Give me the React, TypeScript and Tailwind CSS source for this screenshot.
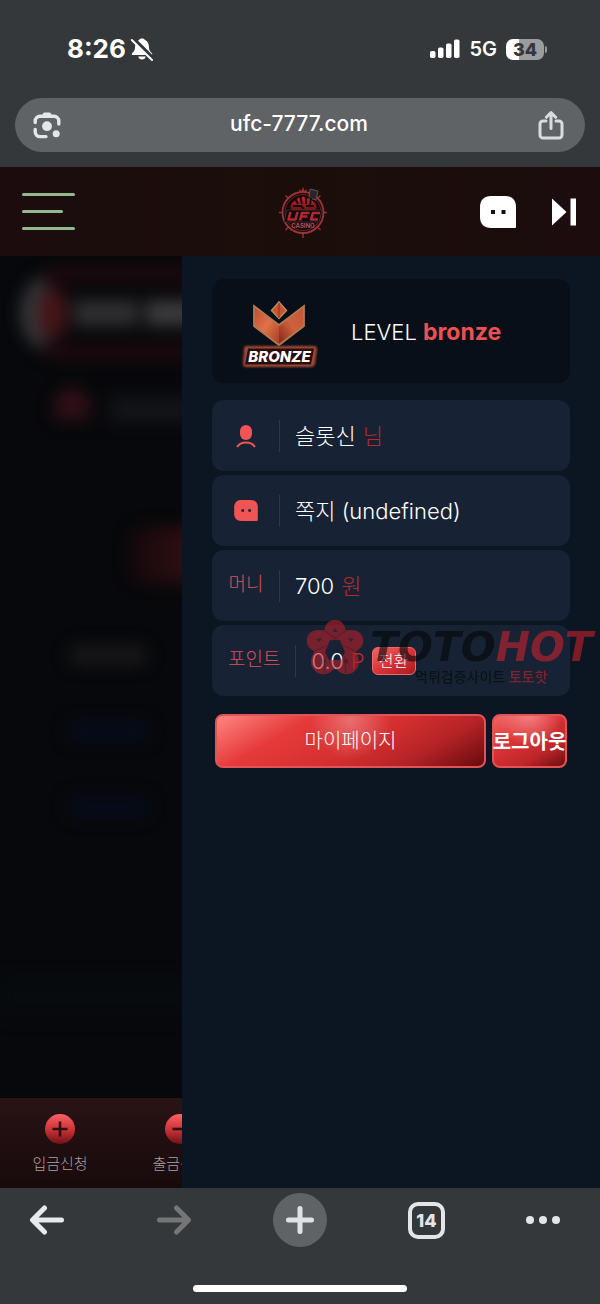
import type { ReactNode } from 'react';

const tabs = [
  { label: '입금신청', sign: 'plus' },
  { label: '출금신청', sign: 'minus' },
];

const BellOffIcon = () => (
  <svg viewBox="0 0 24 24" className="h-6 w-6" aria-hidden="true">
    <path
      fill="#fff"
      d="M12 1.600c-1.700 0-2.500.6-3 1.500C6.500 4.200 5.200 6.600 5.100 9.400c-.1 3.500-.7 4.600-2.900 6.600-.9.900-.5 2.100.9 2.100h17.800c1.400 0 1.800-1.200.9-2.100-2.200-2-2.800-3.100-2.900-6.600-.1-2.800-1.400-5.200-3.900-6.300-.5-.9-1.300-1.500-3-1.500zM8.300 19.500h7.400c-.3 1.900-1.700 3-3.700 3s-3.400-1.100-3.700-3z"
    />
    <path d="M3.200 1.600 23 21.400" stroke="#35383a" strokeWidth="4" />
    <path d="M1.800 3 22 23" stroke="#fff" strokeWidth="1.900" strokeLinecap="round" />
  </svg>
);

const SignalIcon = () => (
  <svg viewBox="0 0 30 20" className="h-5 w-[30px]" fill="#fff" aria-hidden="true">
    <rect x="0" y="12" width="5.500" height="7" rx="1.700" />
    <rect x="8" y="8.500" width="5.500" height="10.500" rx="1.700" />
    <rect x="16" y="4.500" width="5.500" height="14.500" rx="1.700" />
    <rect x="24" y="0.500" width="5.500" height="18.500" rx="1.700" />
  </svg>
);

const LensIcon = () => (
  <svg viewBox="0 0 28 28" className="h-7 w-7" aria-hidden="true">
    <g fill="none" stroke="#e4e7ea" strokeWidth="3.400" strokeLinecap="round">
      <path d="M2.200 11.500V10a4.800 4.800 0 0 1 4.800-4.800h14a4.800 4.800 0 0 1 4.800 4.800v3" />
      <path d="M2.200 18.500v2.300A4.800 4.800 0 0 0 7 25.600h6" />
    </g>
    <path d="M8.500 6l1.600-3.400c.3-.6.8-1 1.500-1h4.800c.7 0 1.200.4 1.500 1L19.500 6z" fill="#e4e7ea" />
    <circle cx="14" cy="15.200" r="4.900" fill="#e4e7ea" />
    <circle cx="23.200" cy="22.800" r="3.500" fill="#e4e7ea" />
  </svg>
);

const ShareIcon = () => (
  <svg
    viewBox="0 0 28 30"
    className="h-[30px] w-7"
    fill="none"
    stroke="#d9dcdf"
    strokeWidth="3"
    strokeLinecap="round"
    strokeLinejoin="round"
    aria-hidden="true"
  >
    <path d="M9 11H6a3 3 0 0 0-3 3v11a3 3 0 0 0 3 3h16a3 3 0 0 0 3-3V14a3 3 0 0 0-3-3h-3" />
    <path d="M14 18.500V3.500M9.300 7.300 14 2.600l4.700 4.700" />
  </svg>
);

const MessageIcon = ({ className, eyes }: { className: string; eyes: string }) => (
  <svg viewBox="0 0 36 32" className={className} aria-hidden="true">
    <path
      fill="currentColor"
      d="M11 0h14c7 0 11 4 11 11v19.500c0 1-.5 1.500-1.500 1.500H11C4 32 0 28 0 21V11C0 4 4 0 11 0z"
    />
    <path d="M11 14h4v4h-4zM21.500 14h4v4h-4z" fill={eyes} />
  </svg>
);

const UserIcon = () => (
  <svg viewBox="0 0 20 24" className="h-6 w-5" aria-hidden="true">
    <rect x="4" y="1" width="12" height="15" rx="6" fill="#f05454" />
    <path d="M1.500 22.300c4-5 13-5 17 0" fill="none" stroke="#f05454" strokeWidth="2" strokeLinecap="round" />
  </svg>
);

const UfcLogo = () => (
  <svg viewBox="0 0 48 52" className="h-[52px] w-12" role="img" aria-label="UFC Casino">
    <defs>
      <linearGradient id="ufcFill" x1="0" y1="0" x2="0" y2="1">
        <stop offset="0" stopColor="#c32a32" />
        <stop offset="1" stopColor="#6c1016" />
      </linearGradient>
    </defs>
    <path
      d="M24 45v7M0 26.500h6M42 26.500h6M6.500 9.500l4 4M41.500 9.500l-4 4M6.500 44l4-4M41.500 44l-4-4"
      stroke="#8f3035"
      strokeWidth="1.500"
    />
    <circle cx="24" cy="26.500" r="20.500" fill="#160809" stroke="#9c3439" strokeWidth="1.800" />
    <circle cx="24" cy="26.500" r="18" fill="none" stroke="#6b2226" strokeWidth="1" />
    <path d="M21 7l-1-4 2.500 2L24 1l1.500 4L28 3l-1 4z" fill="#a33037" />
    <path d="M31 3l8 2-2 9-7-2z" fill="#2b2527" stroke="#5c5557" strokeWidth="1" />
    <path
      d="M11 21c1-4 3-6 6-7l2-3 3 1 2-2 3 2 4 0 3 3c2 1 4 4 4 7l-3 3H13z"
      fill="url(#ufcFill)"
      stroke="#350a0d"
      strokeWidth="1"
    />
    <path
      d="M16 12l3 6M21 10l2 8M27 10v8M32 12l-1 7M14 20h8l3 3M27 20h8"
      stroke="#1c0708"
      strokeWidth="1.800"
      fill="none"
    />
    <path d="M8 24h35l-3 12H5z" fill="#130a0c" stroke="#473c3e" strokeWidth="0.600" />
    <g fill="none" stroke="#b12730" strokeWidth="2.600" strokeLinejoin="round">
      <path d="M11.500 26l-2 7.500h7l2-7.500M21 34.500l2-7.500h7.500M22.500 30.500h6M41 27h-7l-2 6.500h7" />
    </g>
    <text x="24" y="42" textAnchor="middle" fill="#b95156" className="font-['Inter'] text-[6px] font-bold">
      CASINO
    </text>
  </svg>
);

const BronzeBadge = () => (
  <svg viewBox="0 0 80 74" className="h-[74px] w-20" role="img" aria-label="Bronze">
    <defs>
      <linearGradient id="bronzeLeft" x1="0" y1="0" x2="1" y2="1">
        <stop offset="0" stopColor="#b94c30" />
        <stop offset="0.500" stopColor="#e0714a" />
        <stop offset="1" stopColor="#a83c22" />
      </linearGradient>
      <linearGradient id="bronzeRight" x1="1" y1="0" x2="0" y2="1">
        <stop offset="0" stopColor="#c25634" />
        <stop offset="0.500" stopColor="#cf603e" />
        <stop offset="1" stopColor="#7e2814" />
      </linearGradient>
      <filter id="plateGlow" x="-20%" y="-50%" width="140%" height="200%">
        <feGaussianBlur stdDeviation="1.200" />
      </filter>
    </defs>
    <g transform="translate(-1 6)">
      <path d="M14 5l25 19v20L14 25z" fill="url(#bronzeLeft)" />
      <path d="M64 5 39 24v20l25-19z" fill="url(#bronzeRight)" />
      <path d="M14 5l25 19L64 5v20L39 44 14 25z" fill="none" stroke="#b27a52" strokeWidth="1.800" />
      <path d="M39 1l7.500 8.500-7.500 8-7.500-8z" fill="#c9532f" stroke="#b98a60" strokeWidth="1.500" />
      <path d="M39 2v15" stroke="#8d3218" strokeWidth="1" />
      <path d="M6 45h68q3 0 3 3l-2 15q-1 3-4 3H6q-3 0-3-3l1-15q0-3 2-3z" fill="#a04a34" filter="url(#plateGlow)" />
      <path d="M8 47.500h66l-3 16H5z" fill="#2a0c0c" />
      <text
        x="39.500"
        y="61"
        textAnchor="middle"
        fill="#fff"
        className="font-['Inter'] text-[15px] font-extrabold italic"
      >
        BRONZE
      </text>
    </g>
  </svg>
);

const FlowerMark = () => (
  <svg viewBox="0 0 58 58" className="h-[58px] w-[58px] shrink-0" aria-hidden="true">
    <path
      fill="#b81f2b"
      fillRule="evenodd"
      d="M29 1c6 0 10 4 10.500 10.500C49 9.500 56 13 57 19.500c1 6-2 10-7.500 13C53 38 54 43 52 47.500c-2.500 5.500-8 8.500-13.500 7.500-4-.7-7-3-9.500-6-2.500 3-5.500 5.300-9.500 6-5.500 1-11-2-13.500-7.500-2-4.500-1-9.500 2.500-15C3 29.500 0 25.500 1 19.500c1-6.500 8-10 17.500-8C19 5 23 1 29 1zM24 21l-5 12 4 8h12l4-8-5-12z"
    />
    <path
      d="M29 9l2.500 4h-5zM10 20l6-1-3 4zM48 20l-6-1 3 4zM16 45l1-6 4 4zM42 45l-1-6-4 4z"
      fill="#172334"
      opacity="0.700"
    />
    <path
      d="M19 12l14 10M39 12 25 22M49 32l-15-7M9 32l15-7M40 54l-2-17M18 54l2-17"
      stroke="#7a1822"
      strokeWidth="1.200"
      opacity="0.700"
    />
  </svg>
);

const InfoRow = ({ label, children }: { label: ReactNode; children: ReactNode }) => (
  <li className="relative flex h-[71px] items-center gap-[15px] rounded-xl bg-[#172334] px-4">
    <span className="flex min-w-9 justify-center text-[19px] font-light text-[#d9505a]">{label}</span>
    <span className="h-8 w-px bg-[#263a50]" />
    <div className="flex items-center gap-[7px] pt-px text-[22px] font-light whitespace-nowrap text-white">
      {children}
    </div>
  </li>
);

const Watermark = () => (
  <div className="pointer-events-none absolute -top-[6px] left-[94px] flex items-start gap-[6px] whitespace-nowrap opacity-60">
    <FlowerMark />
    <div className="pt-[6px]">
      <p className="font-['DejaVu_Sans'] text-[41px] leading-[44px] font-bold text-[#030608] italic">
        TOTO<span className="text-[#c9202c]">HOT</span>
      </p>
      <p className="pl-[45px] text-[14px] leading-4 font-medium text-[#030608]">
        먹튀검증사이트 <span className="text-[#c9202c]">토토핫</span>
      </p>
    </div>
  </div>
);

const BrowserTop = () => (
  <header className="bg-[#35383a] px-[15px] pb-[15px]">
    <div className="flex h-[98px] items-center justify-between pr-[38px] pl-[52px]">
      <div className="flex items-center gap-1">
        <span className="text-[26px] leading-8 font-bold text-white">8:26</span>
        <BellOffIcon />
      </div>
      <div className="flex items-center gap-[9px]">
        <SignalIcon />
        <span className="text-[20px] font-semibold text-white">5G</span>
        <div className="flex items-center gap-px">
          <span className="flex h-[21px] w-[38px] items-center justify-center rounded-[7px] bg-linear-to-r from-white from-35% to-[#9a9c9d] to-35% text-[18px] font-extrabold text-[#35383a]">
            34
          </span>
          <span className="h-[7px] w-[2px] rounded-r-full bg-[#9a9c9d]" />
        </div>
      </div>
    </div>
    <div className="flex h-[54px] items-center justify-between rounded-full bg-[#5f6366] pr-5 pl-[18px]">
      <button type="button" aria-label="Lens">
        <LensIcon />
      </button>
      <a href="#" className="pb-[2px] text-[21px] leading-6 font-medium text-white">
        ufc-7777.com
      </a>
      <button type="button" aria-label="Share">
        <ShareIcon />
      </button>
    </div>
  </header>
);

const SiteHeader = () => (
  <div className="grid h-[89px] grid-cols-3 items-center bg-linear-to-r from-[#1c0c0e] via-[#1b0e0a] to-[#1c0c0e] pr-6 pl-[22px]">
    <button type="button" aria-label="Menu" className="flex flex-col gap-[14px]">
      <span className="h-[3px] w-[53px] rounded-full bg-[#94b990]" />
      <span className="h-[3px] w-[41px] rounded-full bg-[#94b990]" />
      <span className="h-[3px] w-[53px] rounded-full bg-[#94b990]" />
    </button>
    <a href="#" className="justify-self-center pl-2">
      <UfcLogo />
    </a>
    <div className="flex items-center gap-9 justify-self-end text-white">
      <button type="button" aria-label="Messages">
        <MessageIcon className="h-8 w-9" eyes="#1c0c0e" />
      </button>
      <button type="button" aria-label="Close menu">
        <svg viewBox="0 0 24 28" className="h-7 w-6" fill="#fff" aria-hidden="true">
          <path d="M0 0.500 14.500 14 0 27.500zM18.500 0.500H24v27h-5.500z" />
        </svg>
      </button>
    </div>
  </div>
);

// Dimmed page that stays behind the open drawer
const DimmedPage = () => (
  <div className="flex w-[182px] shrink-0 flex-col overflow-hidden bg-[#07080b]">
    <div className="flex-1 overflow-hidden" aria-hidden="true">
      <div className="w-[420px] blur-[8px]">
        <div className="mt-3 ml-5 flex h-[90px] items-center gap-2 rounded-full border-y-[10px] border-l-[18px] border-y-[#260a10] border-l-[#34373a] bg-[#0a080b]">
          <span className="h-12 w-7 rounded-full bg-[#451518]" />
          <span className="h-6 w-16 bg-[#303033]" />
          <span className="h-6 w-32 bg-[#3c3c3f]" />
        </div>
        <div className="mt-7 ml-[54px] flex items-center gap-5">
          <span className="h-8 w-9 rounded-t-full bg-[#2f1016]" />
          <span className="mt-3 h-6 w-40 bg-[#131518]" />
        </div>
        <div className="mt-[105px] ml-[130px] h-14 w-40 rounded-2xl bg-linear-to-r from-[#16080b] to-[#381114] to-50%" />
        <div className="mt-[62px] ml-[70px] h-5 w-[76px] bg-[#171719]" />
        <div className="mt-14 ml-[68px] h-5 w-20 bg-[#060c1b]" />
        <div className="mt-14 ml-[68px] h-5 w-20 bg-[#060c1b]" />
        <div className="mt-40 h-10 bg-[#070b0e]" />
      </div>
    </div>
    <nav className="flex h-[90px] bg-linear-to-b from-[#291315] to-[#180a0b]">
      {tabs.map((tab) => (
        <a key={tab.label} href="#" className="flex w-[120px] shrink-0 flex-col items-center gap-[10px] pt-4">
          <svg viewBox="0 0 30 30" className="h-[30px] w-[30px]" aria-hidden="true">
            <defs>
              <linearGradient id={`tab-${tab.sign}`} x1="0" y1="0" x2="0" y2="1">
                <stop offset="0" stopColor="#f96266" />
                <stop offset="0.500" stopColor="#ce3438" />
                <stop offset="1" stopColor="#701215" />
              </linearGradient>
            </defs>
            <circle cx="15" cy="15" r="15" fill={`url(#tab-${tab.sign})`} />
            <path
              d={tab.sign === 'plus' ? 'M7.500 15h15M15 7.500v15' : 'M7.500 15h15'}
              stroke="#2a1013"
              strokeWidth="2.600"
            />
          </svg>
          <span className="text-[15px] leading-5 font-light whitespace-nowrap text-[#a8a0a2]">{tab.label}</span>
        </a>
      ))}
    </nav>
  </div>
);

const Drawer = () => (
  <aside className="min-w-0 flex-1 bg-[#0b1622] px-[30px] pt-[23px]">
    <div className="flex h-[104px] items-center gap-[30px] rounded-xl bg-[#080f18] pt-[2px] pl-[29px]">
      <BronzeBadge />
      <p className="text-[22px] font-light whitespace-nowrap text-white">
        LEVEL <strong className="text-[23px] font-bold text-[#ec5052]">bronze</strong>
      </p>
    </div>
    <ul className="mt-[17px] flex flex-col gap-1">
      <InfoRow label={<UserIcon />}>
        슬롯신 <span className="text-[#b52a30]">님</span>
      </InfoRow>
      <InfoRow label={<MessageIcon className="h-[21px] w-6 text-[#f05454]" eyes="#172334" />}>
        <a href="#">쪽지 (undefined)</a>
      </InfoRow>
      <InfoRow label="머니">
        700 <span className="text-[#b52a30]">원</span>
      </InfoRow>
      <InfoRow label="포인트">
        0.0 <span className="text-[#b52a30]">P</span>
        <button
          type="button"
          className="h-7 w-11 rounded-md border border-[#f06a6a] bg-linear-to-br from-[#ef6464] via-[#d93236] to-[#a81c20] text-[16px] leading-6 font-light"
        >
          전환
        </button>
        <Watermark />
      </InfoRow>
    </ul>
    <div className="mt-[18px] flex gap-[6px] px-[3px]">
      <button
        type="button"
        className="h-[54px] flex-1 rounded-lg border-2 border-[#e25357] bg-[radial-gradient(circle_at_50%_10%,rgba(235,125,125,0.8),transparent_28%),linear-gradient(150deg,#ff8a86_0%,#e63a3a_28%,#d42f30_55%,#b52326_75%,#64090c_100%)] bg-origin-border text-[20px] font-light text-white"
      >
        마이페이지
      </button>
      <button
        type="button"
        className="h-[54px] w-[75px] rounded-lg border-2 border-[#e25357] bg-[radial-gradient(circle_at_50%_0%,rgba(245,145,145,0.8),transparent_50%),linear-gradient(150deg,#f26a68_0%,#e03538_35%,#bd2629_70%,#64090c_100%)] bg-origin-border text-[20px] font-bold whitespace-nowrap text-white"
      >
        <span className="flex justify-center pt-[2px]">로그아웃</span>
      </button>
    </div>
  </aside>
);

const arrowPath = 'M32 16H4M15 4 3 16l12 12';

const BrowserBottom = () => (
  <footer className="flex h-[116px] flex-col items-center justify-between bg-[#35383a] px-5 pt-[5px] pb-3">
    <div className="flex w-full items-center justify-between">
      <button type="button" aria-label="Back" className="flex size-[54px] items-center justify-center">
        <svg viewBox="0 0 35 32" className="h-8 w-9" fill="none" stroke="#e6eaee" strokeWidth="5" strokeLinecap="round" strokeLinejoin="round">
          <path d={arrowPath} />
        </svg>
      </button>
      <button type="button" aria-label="Forward" className="flex size-[54px] items-center justify-center">
        <svg viewBox="0 0 35 32" className="h-8 w-9 rotate-180" fill="none" stroke="#747677" strokeWidth="5" strokeLinecap="round" strokeLinejoin="round">
          <path d={arrowPath} />
        </svg>
      </button>
      <button type="button" aria-label="New tab" className="flex size-[54px] items-center justify-center rounded-full bg-[#5f6366]">
        <svg viewBox="0 0 28 28" className="size-7" stroke="#dfe3e6" strokeWidth="5" strokeLinecap="round">
          <path d="M2.500 14h23M14 2.500v23" />
        </svg>
      </button>
      <button type="button" aria-label="Tabs" className="flex size-[54px] items-center justify-center">
        <span className="flex size-[37px] items-center justify-center rounded-[10px] border-4 border-[#e3e6e9] text-[18px] font-extrabold text-[#e3e6e9]">
          14
        </span>
      </button>
      <button type="button" aria-label="More" className="flex size-[54px] items-center gap-[5px]">
        <span className="size-2 rounded-full bg-[#e3e6e9]" />
        <span className="size-2 rounded-full bg-[#e3e6e9]" />
        <span className="size-2 rounded-full bg-[#e3e6e9]" />
      </button>
    </div>
    <span className="h-[7px] w-[214px] rounded-full bg-white" />
  </footer>
);

export default function App() {
  return (
    <div className="flex min-h-screen flex-col overflow-x-hidden bg-[#0b1622] font-['Inter','Noto_Sans_CJK_KR',sans-serif]">
      <BrowserTop />
      <SiteHeader />
      <main className="flex flex-1">
        <DimmedPage />
        <Drawer />
      </main>
      <BrowserBottom />
    </div>
  );
}
